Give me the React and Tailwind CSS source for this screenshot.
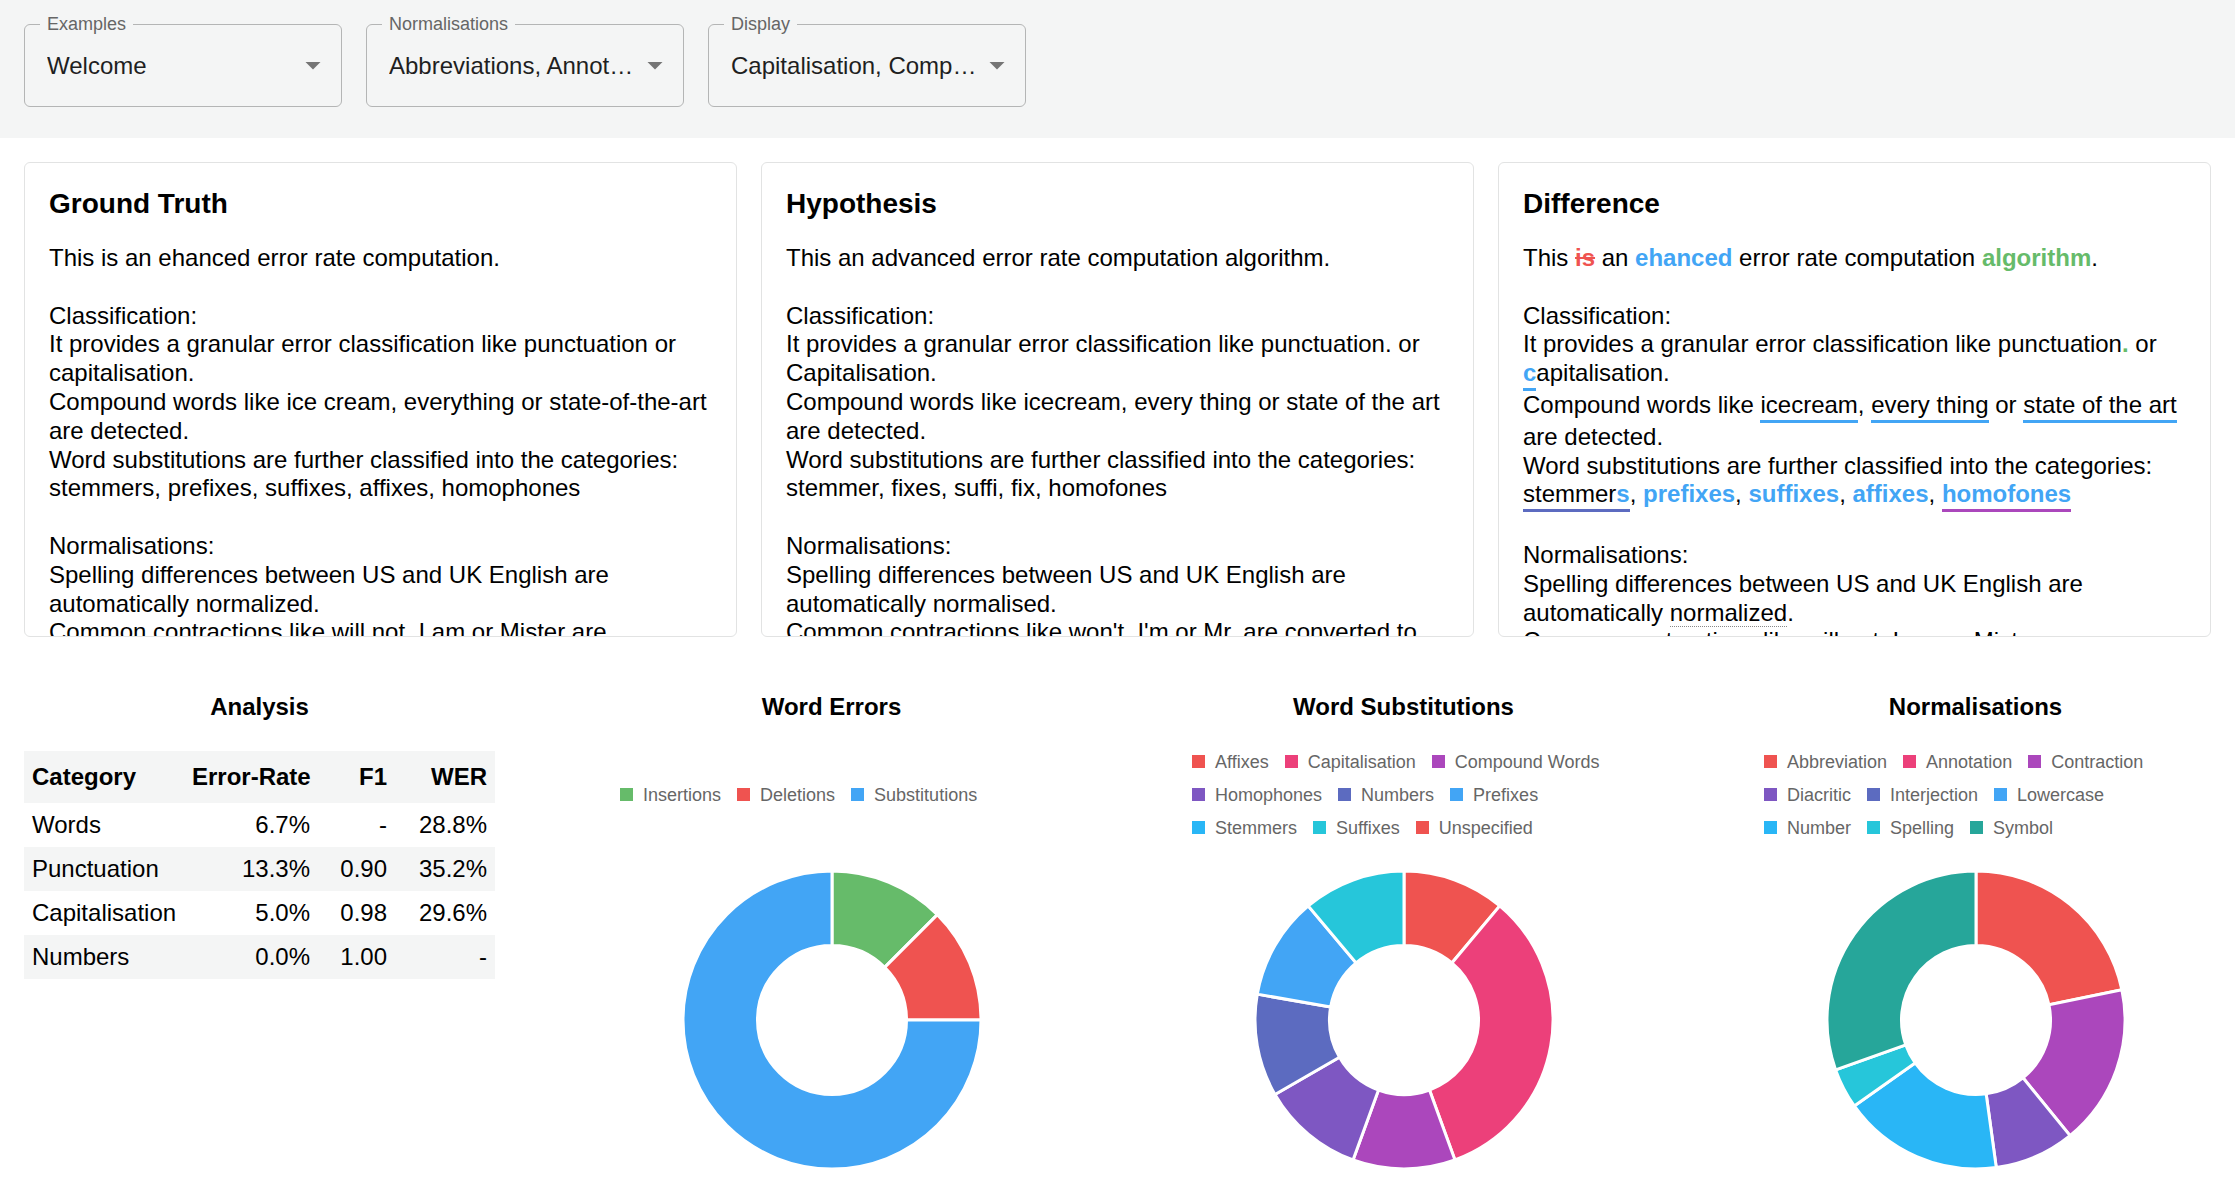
import React from 'react'

/*
 * Error-rate report: selectors on top, the three text panels, then the
 * analysis table and the three donut charts.
 */

const C = {
  red: '#ef5350',
  pink: '#ec407a',
  purple: '#ab47bc',
  deepPurple: '#7e57c2',
  indigo: '#5c6bc0',
  blue: '#42a5f5',
  lightBlue: '#29b6f6',
  cyan: '#26c6da',
  teal: '#26a69a',
  green: '#66bb6a',
}

const wordErrors = [
  [{ label: 'Insertions', color: C.green, value: 1 }, { label: 'Deletions', color: C.red, value: 1 }, { label: 'Substitutions', color: C.blue, value: 6 }],
]

const substitutions = [
  [{ label: 'Affixes', color: C.red, value: 1 }, { label: 'Capitalisation', color: C.pink, value: 3 }, { label: 'Compound Words', color: C.purple, value: 1 }],
  [{ label: 'Homophones', color: C.deepPurple, value: 1 }, { label: 'Numbers', color: C.indigo, value: 1 }, { label: 'Prefixes', color: C.blue, value: 1 }],
  [{ label: 'Stemmers', color: C.lightBlue, value: 0 }, { label: 'Suffixes', color: C.cyan, value: 1 }, { label: 'Unspecified', color: C.red, value: 0 }],
]

const normalisations = [
  [{ label: 'Abbreviation', color: C.red, value: 5 }, { label: 'Annotation', color: C.pink, value: 0 }, { label: 'Contraction', color: C.purple, value: 4 }],
  [{ label: 'Diacritic', color: C.deepPurple, value: 2 }, { label: 'Interjection', color: C.indigo, value: 0 }, { label: 'Lowercase', color: C.blue, value: 0 }],
  [{ label: 'Number', color: C.lightBlue, value: 4 }, { label: 'Spelling', color: C.cyan, value: 1 }, { label: 'Symbol', color: C.teal, value: 7 }],
]

const analysis = [
  ['Words', '6.7%', '-', '28.8%'],
  ['Punctuation', '13.3%', '0.90', '35.2%'],
  ['Capitalisation', '5.0%', '0.98', '29.6%'],
  ['Numbers', '0.0%', '1.00', '-'],
]

const groundTruth =
  'This is an ehanced error rate computation.\n\nClassification:\nIt provides a granular error classification like punctuation or capitalisation.\nCompound words like ice cream, everything or state-of-the-art are detected.\nWord substitutions are further classified into the categories: stemmers, prefixes, suffixes, affixes, homophones\n\nNormalisations:\nSpelling differences between US and UK English are automatically normalized.\nCommon contractions like will not, I am or Mister are converted to their short forms.'

const hypothesis =
  "This an advanced error rate computation algorithm.\n\nClassification:\nIt provides a granular error classification like punctuation. or Capitalisation.\nCompound words like icecream, every thing or state of the art are detected.\nWord substitutions are further classified into the categories: stemmer, fixes, suffi, fix, homofones\n\nNormalisations:\nSpelling differences between US and UK English are automatically normalised.\nCommon contractions like won't, I'm or Mr. are converted to their long forms."

function Select({ label, value }) {
  return (
    <div className="relative h-[83px] w-[318px] rounded-[6px] border border-[#b4b5b5]">
      <span className="absolute -top-[11px] left-[15px] bg-[#f4f5f5] px-[7px] text-[18px] leading-[20px] text-[#666]">{label}</span>
      <div className="flex h-full items-center pl-[22px] pr-[44px] text-[24px] text-[#1f1f1f]">
        <span className="truncate">{value}</span>
      </div>
      <svg className="absolute right-[10px] top-[22px] h-[36px] w-[36px]" viewBox="0 0 24 24">
        <path d="M7 10l5 5 5-5z" fill="#757575" />
      </svg>
    </div>
  )
}

function Panel({ title, children }) {
  return (
    <section className="h-[475px] overflow-hidden rounded-[6px] border border-[#e2e3e3] pl-[24px] pr-[18px] pt-[24px]">
      <h2 className="text-[28px] font-bold leading-[34px]">{title}</h2>
      <div className="mt-[23px] whitespace-pre-wrap text-[24px] leading-[28.8px]">{children}</div>
    </section>
  )
}

function Under({ color, className = '', children }) {
  return (
    <span className={`inline-block border-b-[3px] ${className}`} style={{ borderColor: color }}>
      {children}
    </span>
  )
}

function DiffText() {
  const blue = 'font-bold text-[#42a5f5]'
  const green = 'font-bold text-[#66bb6a]'
  return (
    <>
      {'This '}
      <span className="font-bold text-[#ef5350] line-through">is</span>
      {' an '}
      <span className={blue}>ehanced</span>
      {' error rate computation '}
      <span className={green}>algorithm</span>
      {'.\n\nClassification:\nIt provides a granular error classification like punctuation'}
      <span className={green}>.</span>
      {' or '}
      <span className="whitespace-nowrap">
        <Under color={C.blue} className={blue}>c</Under>apitalisation.
      </span>
      {'\nCompound words like '}
      <Under color={C.blue}>icecream</Under>
      {', '}
      <Under color={C.blue}>every thing</Under>
      {' or '}
      <Under color={C.blue}>state of the art</Under>
      {' are detected.\nWord substitutions are further classified into the categories: '}
      <Under color={C.indigo}>
        stemmer<span className={blue}>s</span>
      </Under>
      {', '}
      <span className={blue}>prefixes</span>
      {', '}
      <span className={blue}>suffixes</span>
      {', '}
      <span className={blue}>affixes</span>
      {', '}
      <Under color={C.purple} className={blue}>homofones</Under>
      {'\n\nNormalisations:\nSpelling differences between US and UK English are automatically '}
      <span className="border-b border-dotted border-[#888]">normalized</span>
      {'.\nCommon contractions like will not, I am or Mister are converted to their short forms.'}
    </>
  )
}

function arc(cx, cy, r, r0, a0, a1) {
  const pt = (a, rad) => {
    const t = (a * Math.PI) / 180
    return `${(cx + rad * Math.sin(t)).toFixed(2)} ${(cy - rad * Math.cos(t)).toFixed(2)}`
  }
  const large = a1 - a0 > 180 ? 1 : 0
  return `M${pt(a0, r)} A${r} ${r} 0 ${large} 1 ${pt(a1, r)} L${pt(a1, r0)} A${r0} ${r0} 0 ${large} 0 ${pt(a0, r0)} Z`
}

function Donut({ rows }) {
  const items = rows.flat().filter((d) => d.value > 0)
  const total = items.reduce((s, d) => s + d.value, 0)
  let a = 0
  return (
    <svg width="300" height="300" viewBox="0 0 300 300" className="mx-auto mt-[26px] block">
      {items.map((d) => {
        const a0 = a
        a += (d.value / total) * 360
        return <path key={d.label} d={arc(150, 150, 149, 74.5, a0, a)} fill={d.color} stroke="#fff" strokeWidth="3" />
      })}
    </svg>
  )
}

function Chart({ title, rows }) {
  return (
    <div>
      <h3 className="text-center text-[24px] font-bold leading-[28px]">{title}</h3>
      <div className="mt-[24px] flex h-[99px] flex-col justify-center pl-[24px]">
        {rows.map((row, i) => (
          <div key={i} className="flex h-[33px] items-center gap-[16px]">
            {row.map((d) => (
              <div key={d.label} className="flex items-center gap-[10px]">
                <span className="h-[13px] w-[13px]" style={{ backgroundColor: d.color }} />
                <span className="text-[18px] leading-[20px] text-[#666]">{d.label}</span>
              </div>
            ))}
          </div>
        ))}
      </div>
      <Donut rows={rows} />
    </div>
  )
}

function Analysis() {
  return (
    <div>
      <h3 className="text-center text-[24px] font-bold leading-[28px]">Analysis</h3>
      <table className="mt-[30px] w-full table-fixed border-collapse whitespace-nowrap text-[24px] leading-[28px]">
        <thead>
          <tr className="h-[52px] bg-[#f4f5f5]">
            <th className="px-[8px] text-left font-bold">Category</th>
            <th className="w-[134px] px-[8px] text-right font-bold">Error-Rate</th>
            <th className="w-[77px] px-[8px] text-right font-bold">F1</th>
            <th className="w-[100px] px-[8px] text-right font-bold">WER</th>
          </tr>
        </thead>
        <tbody>
          {analysis.map((r, i) => (
            <tr key={r[0]} className={i % 2 ? 'h-[44px] bg-[#f4f5f5]' : 'h-[44px] bg-white'}>
              <td className="px-[8px] text-left">{r[0]}</td>
              <td className="px-[8px] text-right">{r[1]}</td>
              <td className="px-[8px] text-right">{r[2]}</td>
              <td className="px-[8px] text-right">{r[3]}</td>
            </tr>
          ))}
        </tbody>
      </table>
    </div>
  )
}

export default function App() {
  return (
    <div className="min-h-screen bg-white font-['Liberation_Sans',Arial,sans-serif] text-black">
      <header className="flex h-[138px] gap-[24px] bg-[#f4f5f5] px-[24px] pt-[24px]">
        <Select label="Examples" value="Welcome" />
        <Select label="Normalisations" value="Abbreviations, Annotations, Contractions, Diacritics" />
        <Select label="Display" value="Capitalisation, Compound Words, Homophones" />
      </header>

      <main className="px-[24px] pt-[24px]">
        <div className="grid grid-cols-3 gap-[24px]">
          <Panel title="Ground Truth">{groundTruth}</Panel>
          <Panel title="Hypothesis">{hypothesis}</Panel>
          <Panel title="Difference">
            <DiffText />
          </Panel>
        </div>

        <div className="grid grid-cols-4 gap-[101px] pt-[56px]">
          <Analysis />
          <Chart title="Word Errors" rows={wordErrors} />
          <Chart title="Word Substitutions" rows={substitutions} />
          <Chart title="Normalisations" rows={normalisations} />
        </div>
      </main>
    </div>
  )
}
